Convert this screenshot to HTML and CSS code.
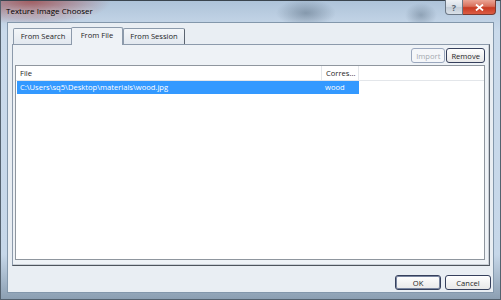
FILE: index.html
```html
<!DOCTYPE html>
<html lang="en">
<head>
<meta charset="UTF-8">
<title>Texture Image Chooser</title>
<link rel="stylesheet" href="styles.css">
</head>
<body>

<div class="window">
    <div class="titlebar">
        <span class="title">Texture Image Chooser</span>
        <div class="caption">
            <span class="cap help">?</span>
            <span class="cap close">
                <svg width="9" height="7" viewBox="0 0 9 7"><path d="M1 0.5 L8 6.5 M8 0.5 L1 6.5" stroke="#fff" stroke-width="1.8"/></svg>
            </span>
        </div>
    </div>

    <div class="frame">
        <div class="client">
            <div class="tabs">
                <div class="tab">From Search</div>
                <div class="tab active">From File</div>
                <div class="tab">From Session</div>
            </div>

            <div class="pane">
                <div class="toolbar">
                    <button class="btn" disabled>Import</button>
                    <button class="btn">Remove</button>
                </div>

                <div class="list">
                    <div class="list-head">
                        <div class="col-file">File</div>
                        <div class="col-corr">Corres...</div>
                    </div>
                    <div class="list-row selected">
                        <div class="col-file">C:\Users\sq5\Desktop\materials\wood.jpg</div>
                        <div class="col-corr">wood</div>
                    </div>
                </div>
            </div>

            <div class="footer">
                <button class="btn wide default">OK</button>
                <button class="btn wide">Cancel</button>
            </div>
        </div>
    </div>
</div>

</body>
</html>
```

FILE: styles.css
```css
* { margin: 0; padding: 0; box-sizing: border-box; }
body { width: 501px; height: 300px; overflow: hidden; font-family: "Open Sans", "Liberation Sans", sans-serif; font-size: 7.6px; color: #1e1e1e; background: #6d7f92; }

.window {
    height: 300px; display: flex; flex-direction: column;
    border: 1px solid #55626f; border-top-color: #3a444e;
    background:
        radial-gradient(ellipse 80px 24px at 30px 0, rgba(160, 70, 70, 0.8), rgba(160, 70, 70, 0) 100%),
        radial-gradient(ellipse 30px 14px at 305px 12px, rgba(90, 110, 130, 0.55), rgba(90, 110, 130, 0)),
        radial-gradient(ellipse 16px 12px at 420px 14px, rgba(90, 110, 130, 0.45), rgba(90, 110, 130, 0)),
        linear-gradient(#aec3d9, #cadaeb 30px, #c6d7e9 85%, #8c9fb2);
}

/* title bar */
.titlebar { height: 21px; display: flex; align-items: flex-start; padding: 0 4px 0 5px; }
.title { padding-top: 4px; font-size: 8px; color: #000; text-shadow: 0 0 6px rgba(255,255,255,0.9); }
.caption { margin-left: auto; display: flex; margin-top: -1px; }
.cap { height: 15px; display: flex; align-items: center; justify-content: center; border: 1px solid #6b7785; border-top: none; }
.help { width: 18px; border-radius: 0 0 0 4px; background: linear-gradient(#eef1f5, #d5dce4 50%, #c3ccd6 51%, #d9e0e8); color: #5a6570; font-size: 9px; font-weight: bold; }
.close { width: 33px; border-left: none; border-radius: 0 0 4px 0; background: linear-gradient(#eaa595, #d9705c 45%, #c73a22 55%, #dc5d44); border-color: #7a3a30; }

/* frame + client area */
.frame { flex: 1; display: flex; padding: 0 6px 6px 6px; }
.client {
    flex: 1; display: flex; flex-direction: column;
    background: #e9eef3; border: 1px solid #8397ab;
    padding: 4px 2px 1px 4px;
}

/* tabs */
.tabs { display: flex; padding-left: 1px; height: 17px; align-items: flex-end; position: relative; z-index: 1; }
.tab {
    height: 16px; min-width: 60px; padding: 2px 6px 0 6px; margin-right: -1px; text-align: center;
    border: 1px solid #8c9aab; border-bottom: none; border-radius: 2px 2px 0 0;
    background: linear-gradient(#f3f6f9, #e2e8ef);
}
.tab:last-child { min-width: 62px; border-right-color: #5b6470; }
.tab.active { height: 18px; min-width: 52px; margin: 0 0 -1px -1px; padding: 2px 7px 0 7px; background: #eef2f6; border-color: #8c9aab; }

.pane {
    flex: 1; display: flex; flex-direction: column; margin-right: 1px;
    background: #eef2f6; border: 1px solid #8c9aab; border-right-color: #5c6570; border-bottom-color: #4d545c;
    box-shadow: inset -1px -1px 0 #c9cfd6;
    padding: 3px 4px 5px 2px;
}

/* buttons */
.toolbar { display: flex; justify-content: flex-end; gap: 1px; }
.btn {
    height: 15px; padding: 0 4px; font: inherit; color: #1e1e1e; line-height: 12px;
    border: 1px solid #36405c; border-radius: 3px;
    background: linear-gradient(#ffffff, #f3f3f3 50%, #e8e8e8);
}
.btn:disabled { color: #a4a9b0; border-color: #9aa7bd; background: #f4f6f9; }
.wide { width: 46px; }
.btn.default { box-shadow: inset 0 0 0 1px #7a86a0; }

/* list */
.list { flex: 1; margin-top: 2px; background: #fff; border: 1px solid #8f969e; }
.list-head { display: flex; height: 15px; border-bottom: 1px solid #e3e6ea; }
.list-head > div { padding: 2px 0 0 4px; border-right: 1px solid #e3e6ea; }
.list-row { display: flex; height: 13px; margin-left: 1px; }
.list-row > div { padding: 1px 0 0 3px; }
.col-file { width: 306px; }
.col-corr { width: 37px; }
.list-row .col-file { width: 305px; }
.list-row.selected { width: 342px; background: #3399ff; color: #fff; }

.footer { display: flex; justify-content: flex-end; gap: 4px; margin-top: 9px; padding-bottom: 1px; }
```
